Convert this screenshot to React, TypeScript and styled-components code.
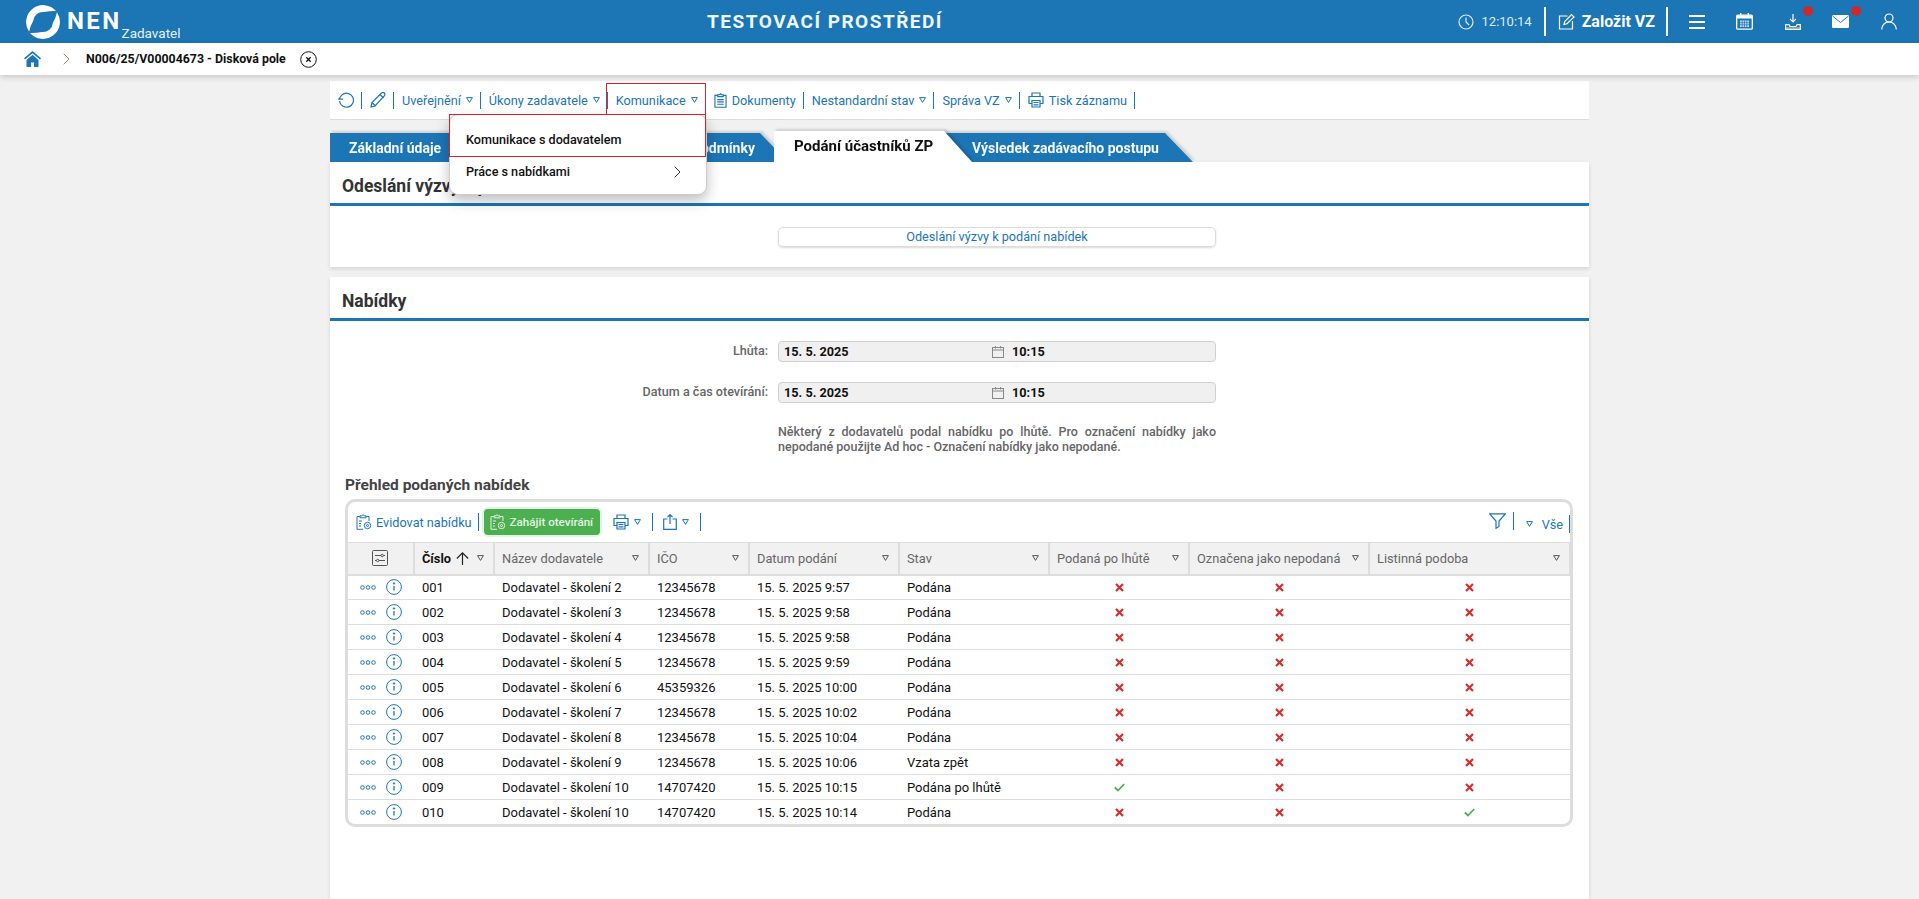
import React from 'react';
import styled, { createGlobalStyle } from 'styled-components';

const BLUE = '#1c75b5';

const GlobalStyle = createGlobalStyle`
  html, body {
    margin: 0;
    padding: 0;
    height: 899px;
    overflow: hidden;
    background: #f1f1f1;
    font-family: Roboto, "Liberation Sans", sans-serif;
    font-size: 13px;
  }
  * { box-sizing: border-box; }
`;

const TriSvg = styled.svg`
  flex: none;
`;

const Tri = () => (
  <TriSvg viewBox="0 0 7 6" width="7" height="6">
    <path d="M.6.6h5.800L3.500 5.400z" fill="none" stroke="currentColor" strokeWidth="1" strokeLinejoin="round" />
  </TriSvg>
);

function Logo() {
  const crescent =
    'M31 7.07A17 17 0 0 0 4.07 27.75Q5.5 21 8.04 17.13A10 10 0 0 1 18.87 8.04Q26 6.8 31 7.07Z';
  return (
    <svg viewBox="0 0 36 36" width="36" height="36" fill="#fff">
      <path d={crescent} />
      <path d={crescent} transform="rotate(180 18 18)" />
    </svg>
  );
}

const s = { fill: 'none', stroke: 'currentColor', strokeWidth: 1.2 };

const IconClock = () => (
  <svg viewBox="0 0 16 16" width="16" height="16" {...s}>
    <circle cx="8" cy="8" r="7" />
    <path d="M8 3.5V8l3 3" />
  </svg>
);
const IconEdit = () => (
  <svg viewBox="0 0 17 17" width="17" height="17" {...s}>
    <path d="M9.5 3H1.500v13h13V8" />
    <path d="M6 11.5l.7-3L13.500 1.500l2.500 2.500-7 6.800z" />
  </svg>
);
const IconMenu = () => (
  <svg viewBox="0 0 16 14" width="16" height="14" fill="none" stroke="currentColor" strokeWidth="1.8">
    <path d="M0 1h16M0 7h16M0 13h16" />
  </svg>
);
const IconCalendar = () => (
  <svg viewBox="0 0 17 17" width="17" height="17">
    <rect x=".7" y="2.2" width="15.6" height="14" rx="1" fill="none" stroke="currentColor" strokeWidth="1.3" />
    <path d="M1 2.5h15v3H1zM4 0h1.4v3H4zM11.600 0H13v3h-1.400z" fill="currentColor" />
    <path d="M4 7.5h9V14H4z" fill="currentColor" opacity=".75" />
    <path d="M4 9.7h9M4 11.8h9M6.200 7.500V14M8.500 7.500V14M10.800 7.500V14" stroke={BLUE} strokeWidth=".7" />
  </svg>
);
const IconTray = () => (
  <svg viewBox="0 0 16 16" width="16" height="16" fill="none" stroke="currentColor" strokeWidth="1.2">
    <path d="M8 0v7.5M5 5l3 3 3-3" />
    <path d="M.7 15.300V10.700h3.300l1 1.800h6l1-1.800h3.300v4.600z" />
    <path d="M1.300 13h13.400v2H1.300z" fill="currentColor" opacity=".35" stroke="none" />
  </svg>
);
const IconMail = () => (
  <svg viewBox="0 0 17 13" width="17" height="13">
    <rect width="17" height="13" rx="1.2" fill="currentColor" />
    <path d="M.5 1l8 6.500 8-6.500" fill="none" stroke={BLUE} strokeWidth="1" />
  </svg>
);
const IconUser = () => (
  <svg viewBox="0 0 16 17" width="16" height="17" {...s}>
    <circle cx="8" cy="5" r="4" />
    <path d="M.7 16.500c0-4 3-7.500 7.300-7.500s7.300 3.500 7.300 7.500" />
  </svg>
);
const IconHome = () => (
  <svg viewBox="0 0 17 16" width="17" height="16">
    <path fill={BLUE} d="M8.500 0L0 7.300l1 1.200 7.500-6.300L16 8.500l1-1.200zM2.500 9v7H7v-4.500h3V16h4.500V9L8.500 3.800z" />
  </svg>
);
const IconChevron = ({ color }: { color: string }) => (
  <svg viewBox="0 0 7 12" width="7" height="12" fill="none" stroke={color} strokeWidth="1">
    <path d="M.7.700L6 6 .7 11.300" />
  </svg>
);
const IconClose = () => (
  <svg viewBox="0 0 17 17" width="17" height="17" fill="none" stroke="#111" strokeWidth="1">
    <circle cx="8.500" cy="8.500" r="7.800" />
    <path d="M6.300 6.300l4.400 4.400m0-4.400l-4.400 4.400" strokeWidth="1.300" />
  </svg>
);
const IconRefresh = () => (
  <svg viewBox="0 0 16 16" width="16" height="16" {...s}>
    <path d="M3.800 3A7 7 0 1 1 1.500 9" />
    <path d="M3.800 3L.7 7.200h4.300" />
  </svg>
);
const IconPencil = () => (
  <svg viewBox="0 0 16 16" width="16" height="16" {...s}>
    <path d="M1 15l1-4.500L11.500 1c1-.8 2-.8 2.800 0 .8.800.8 2 0 2.800L5 14z" />
    <path d="M2 10.500L5.500 14M10 2.500l3.500 3.500" />
  </svg>
);
const IconClipboard = () => (
  <svg viewBox="0 0 14 16" width="13" height="15" {...s}>
    <path d="M4 2.500H1V15.300h12V2.500h-3" />
    <path d="M4 3.800V1.800h1.800L7 .7l1.200 1.100H10v2z" />
    <path d="M3.500 7h7M3.500 9.500h7M3.500 12h7" />
  </svg>
);
const IconPrinter = () => (
  <svg viewBox="0 0 16 16" width="16" height="16" {...s}>
    <path d="M4 4.500V1h8v3.500" />
    <path d="M4 11.500H1V4.500h14v7h-3" />
    <path d="M4 8.500h8v6.500H4zM5.500 10.500h5M5.500 12.800h5" />
  </svg>
);
const IconClipGear = () => (
  <svg viewBox="0 0 16 16" width="16" height="16" {...s} strokeWidth="1">
    <path d="M4 2.500H1V15.300h6M13 7V2.500h-3" />
    <path d="M4 3.800V1.800h1.800L7 .7l1.200 1.100H10v2z" />
    <path d="M3 7h3M3 9.500h2M3 12h2" />
    <circle cx="11.500" cy="11.500" r="3.200" />
    <circle cx="11.500" cy="11.500" r="1" />
  </svg>
);
const IconShare = () => (
  <svg viewBox="0 0 14 16" width="14" height="16" {...s}>
    <path d="M4.500 5H.7v10.300h12.600V5H9.500" />
    <path d="M7 10V.7M4.500 3L7 .7 9.500 3" />
  </svg>
);
const IconFilter = () => (
  <svg viewBox="0 0 17 16" width="17" height="16" {...s}>
    <path d="M.7.800h15.600L10 8v5.500L7 15.300V8z" />
  </svg>
);
const IconSliders = () => (
  <svg viewBox="0 0 16 16" width="16" height="16" fill="none" stroke="#555" strokeWidth="1">
    <rect x=".5" y=".5" width="15" height="15" rx="1" />
    <path d="M3 5.500h6M11.500 5.500H13M3 10.500h1.500M7 10.500h6" />
    <circle cx="10.200" cy="5.500" r="1.200" />
    <circle cx="5.700" cy="10.500" r="1.200" />
  </svg>
);
const IconDots = () => (
  <svg viewBox="0 0 16 5" width="16" height="5" fill="none" stroke={BLUE} strokeWidth="1">
    <circle cx="2.500" cy="2.500" r="1.800" />
    <circle cx="8" cy="2.500" r="1.800" />
    <circle cx="13.500" cy="2.500" r="1.800" />
  </svg>
);
const IconInfo = () => (
  <svg viewBox="0 0 16 16" width="16" height="16" fill="none" stroke={BLUE} strokeWidth="1">
    <circle cx="8" cy="8" r="7.400" />
    <path d="M8 7v4.500" strokeWidth="1.300" />
    <circle cx="8" cy="4.500" r=".7" fill={BLUE} />
  </svg>
);
const IconCross = () => (
  <svg viewBox="0 0 9 9" width="9" height="9" fill="none" stroke="#d32f2f" strokeWidth="2.2">
    <path d="M1 1l7 7m0-7L1 8" />
  </svg>
);
const IconCheck = () => (
  <svg viewBox="0 0 11 9" width="11" height="9" fill="none" stroke="#4caf50" strokeWidth="1.8">
    <path d="M.8 4.500L4 7.500 10.200 1" />
  </svg>
);
const IconDate = () => (
  <svg viewBox="0 0 12 12" width="12" height="12" fill="none" stroke="#888" strokeWidth="1">
    <rect x=".5" y="1.500" width="11" height="10" />
    <path d="M.5 4h11M3.500 0v2.500M8.500 0v2.500" />
  </svg>
);
const IconArrowUp = () => (
  <svg viewBox="0 0 12 12" width="13" height="13" fill="none" stroke="#222" strokeWidth="1.1">
    <path d="M6 12V.8M.8 6L6 .8 11.200 6" />
  </svg>
);

const TopBar = styled.header`
  height: 43px;
  background: ${BLUE};
  color: #fff;
  display: flex;
  align-items: center;
  padding-left: 25px;
  position: relative;
`;

const Brand = styled.div`
  display: flex;
  align-items: center;
  width: 400px;
`;

const BrandName = styled.span`
  font-size: 24px;
  font-weight: 700;
  letter-spacing: 2.4px;
  margin-left: 6px;
  line-height: 1;
  margin-top: -1px;
`;

const BrandRole = styled.span`
  font-size: 13.5px;
  line-height: 1;
  align-self: flex-end;
  margin-bottom: -1px;
  color: #e8f2f9;
`;

const EnvTitle = styled.div`
  position: absolute;
  left: 704px;
  width: 242px;
  text-align: center;
  font-size: 19px;
  font-weight: 700;
  letter-spacing: 1.5px;
  color: #eef6fb;
`;

const TopRight = styled.div`
  margin-left: auto;
  display: flex;
  align-items: center;
  height: 100%;
`;

const Clock = styled.div`
  display: flex;
  align-items: center;
  gap: 8px;
  font-size: 13px;
  color: #dcebf5;
  padding-right: 12px;
`;

const TopDivider = styled.div`
  width: 2px;
  height: 29px;
  background: #fff;
`;

const CreateBtn = styled.div`
  display: flex;
  align-items: center;
  gap: 7px;
  font-size: 16px;
  font-weight: 700;
  padding: 0 11px 0 12px;
`;

const TopIcons = styled.div`
  display: flex;
  align-items: center;
  margin-left: 20px;
  margin-right: 22px;
  gap: 31px;
`;

const TopIcon = styled.div<{ $dot?: boolean }>`
  position: relative;
  display: flex;
  width: 17px;
  height: 17px;
  align-items: center;
  justify-content: center;
  ${(p) =>
    p.$dot &&
    `&::after {
      content: '';
      position: absolute;
      top: -7px;
      right: -12px;
      width: 10px;
      height: 10px;
      border-radius: 50%;
      background: #cd2a2e;
    }`}
`;

const Breadcrumb = styled.div`
  height: 32px;
  background: #fff;
  box-shadow: 0 2px 6px rgba(0, 0, 0, 0.18);
  display: flex;
  align-items: center;
  padding-left: 24px;
  position: relative;
  z-index: 2;
`;

const CrumbArrow = styled.span`
  display: flex;
  margin: 0 16px 0 22px;
`;

const CrumbText = styled.span`
  font-size: 12.35px;
  font-weight: 700;
  color: #111;
`;

const CrumbClose = styled.span`
  display: flex;
  margin-left: 14px;
`;

const Main = styled.main`
  margin-left: 330px;
  width: 1259px;
  padding-top: 6px;
`;

const ActionBar = styled.nav`
  height: 39px;
  background: #fff;
  border-bottom: 1px solid #ddd;
  display: flex;
  align-items: center;
  padding-left: 8px;
  color: ${BLUE};
  position: relative;
`;

const ActionItem = styled.div<{ $boxed?: boolean }>`
  display: flex;
  align-items: center;
  gap: 5px;
  height: 17px;
  font-size: 12.7px;
  padding: 0 7px 0 8px;
  border-right: 1px solid ${BLUE};
  white-space: nowrap;
  position: relative;
  &:first-child {
    padding-left: 0;
  }
  ${(p) =>
    p.$boxed &&
    `&::before {
      content: '';
      position: absolute;
      left: -2px;
      right: -1px;
      top: -9px;
      bottom: -7px;
      border: 1px solid #d9212c;
      border-bottom: 0;
    }`}
`;

const Dropdown = styled.div`
  position: absolute;
  left: 119px;
  top: 33px;
  width: 258px;
  height: 81px;
  background: #fff;
  border: 1px solid #ccc;
  border-radius: 9px;
  box-shadow: 0 6px 14px rgba(0, 0, 0, 0.25);
  z-index: 10;
  color: #111;
  font-weight: 500;
  font-size: 12.6px;
`;

const DropItem = styled.div<{ $active?: boolean }>`
  height: ${(p) => (p.$active ? '43px' : '30px')};
  display: flex;
  align-items: center;
  justify-content: space-between;
  padding: ${(p) => (p.$active ? '8px 25px 0 16px' : '0 25px 1px 16px')};
  ${(p) =>
    p.$active &&
    `
    margin: -1px 0 0 -1px;
    width: 257px;
    border: 1px solid #d9212c;
  `}
`;

const Tabs = styled.div`
  display: flex;
  align-items: flex-end;
  height: 31px;
  margin-top: 11px;
`;

const Tab = styled.div<{ $active?: boolean; $w: number; $ml?: number }>`
  width: ${(p) => p.$w}px;
  margin-left: ${(p) => p.$ml ?? 0}px;
  height: ${(p) => (p.$active ? 31 : 29)}px;
  position: relative;
  z-index: ${(p) => (p.$active ? 3 : 1)};
  filter: drop-shadow(2px -2px 1px rgba(0, 0, 0, 0.13));
  &::before {
    content: '';
    position: absolute;
    inset: 0;
    background: ${(p) => (p.$active ? '#fff' : BLUE)};
    clip-path: polygon(0 0, calc(100% - 28px) 0, 100% 100%, 0 100%);
  }
`;

const TabLabel = styled.span<{ $active?: boolean; $left?: number; $right?: number }>`
  position: absolute;
  top: 7px;
  left: ${(p) => (p.$left !== undefined ? `${p.$left}px` : 'auto')};
  right: ${(p) => (p.$right !== undefined ? `${p.$right}px` : 'auto')};
  font-size: ${(p) => (p.$active ? 15 : 14)}px;
  font-weight: 700;
  white-space: nowrap;
  line-height: 16px;
  color: ${(p) => (p.$active ? '#111' : '#f4f9fc')};
`;

const Panel = styled.section<{ $grow?: boolean; $first?: boolean }>`
  background: #fff;
  box-shadow: 0 2px 4px rgba(0, 0, 0, 0.12);
  margin-top: ${(p) => (p.$first ? 0 : 10)}px;
  height: ${(p) => (p.$grow ? '622px' : '105px')};
  position: relative;
`;

const PanelTitle = styled.h2`
  margin: 0;
  height: 44px;
  padding: 12px 0 0 12px;
  line-height: 24px;
  font-size: 17.5px;
  font-weight: 700;
  color: #333;
  border-bottom: 3px solid ${BLUE};
  white-space: nowrap;
`;

const FormRow = styled.div`
  margin-left: 448px;
  width: 438px;
`;

const WideButton = styled(FormRow)`
  margin-top: 21px;
  height: 20px;
  border: 1px solid #ddd;
  border-radius: 5px;
  box-shadow: 0 1px 2px rgba(0, 0, 0, 0.15);
  color: ${BLUE};
  font-size: 12.67px;
  text-align: center;
  line-height: 18px;
`;

const FieldRow = styled.div<{ $top: number }>`
  display: flex;
  align-items: center;
  margin-top: ${(p) => p.$top}px;
`;

const FieldLabel = styled.label`
  width: 438px;
  text-align: right;
  color: #666;
  font-size: 12.6px;
  font-weight: 500;
  margin-top: -3px;
`;

const FieldBox = styled.div`
  margin-left: 10px;
  width: 438px;
  height: 21px;
  background: #f0f0f0;
  border: 1px solid #d0d0d0;
  border-radius: 4px;
  display: flex;
  align-items: center;
  padding-left: 5px;
  font-weight: 700;
  color: #111;
  font-size: 12.7px;
`;

const FieldDate = styled.span`
  width: 208px;
`;

const FieldTime = styled.span`
  margin-left: 8px;
`;

const Note = styled(FormRow)`
  margin-top: 21px;
  font-size: 12.5px;
  font-weight: 500;
  line-height: 15px;
  color: #666;
  text-align: justify;
`;

const SubTitle = styled.h3`
  margin: 21px 0 0 15px;
  font-size: 15.5px;
  font-weight: 700;
  line-height: 20px;
  color: #444;
`;

const TableCard = styled.div`
  margin: 4px 0 0 15px;
  width: 1228px;
  height: 328px;
  border: 3px solid #ddd;
  border-radius: 10px;
  overflow: hidden;
`;

const TableToolbar = styled.div`
  height: 40px;
  display: flex;
  align-items: center;
  padding: 0 0 0 8px;
  color: ${BLUE};
  font-size: 12.7px;
`;

const ToolItem = styled.div`
  display: flex;
  align-items: center;
  gap: 4px;
  height: 18px;
  padding-right: 6px;
  border-right: 1px solid ${BLUE};
`;

const GreenButton = styled.div`
  margin: 0 13px 0 5px;
  width: 116px;
  height: 26px;
  background: #4caf50;
  border-radius: 4px;
  box-shadow: 0 0 0 2px #e3f3e4;
  color: #e4f4e5;
  display: flex;
  align-items: center;
  gap: 4px;
  padding-left: 6px;
  font-size: 11.6px;
  font-weight: 500;
  white-space: nowrap;
`;

const MenuItem = styled(ToolItem)`
  gap: 5px;
  padding-right: 11px;
  margin-right: 10px;
`;

const ToolRight = styled.div`
  margin-left: auto;
  display: flex;
  align-items: center;
  margin-right: 0;
`;

const VseItem = styled(ToolItem)`
  padding: 0 6px 0 12px;
  gap: 9px;
  margin-top: 4px;
`;

const FilterItem = styled(ToolItem)`
  padding-right: 7px;
  margin-top: -2px;
`;

const Table = styled.table`
  border-collapse: collapse;
  table-layout: fixed;
  width: 1222px;
`;

const Th = styled.th<{ $strong?: boolean }>`
  height: 32px;
  padding: 0 8px 0 7px;
  background: #f1f1f1;
  border-top: 1px solid #ddd;
  border-bottom: 2px solid #ddd;
  border-right: 2px solid #ddd;
  text-align: left;
  font-weight: ${(p) => (p.$strong ? 700 : 400)};
  color: ${(p) => (p.$strong ? '#111' : '#666')};
  font-size: 12.8px;
`;

const ThInner = styled.div`
  display: flex;
  align-items: center;
  justify-content: space-between;
  white-space: nowrap;
  color: inherit;
  svg:last-child {
    color: #555;
    margin-right: 1px;
  }
`;

const SortLabel = styled.span`
  display: inline-flex;
  align-items: center;
  gap: 5px;
`;

const CenterCell = styled.div`
  display: flex;
  justify-content: center;
`;

const Td = styled.td`
  height: 25px;
  padding: 0 8px;
  border-bottom: 1px solid #ddd;
  color: #111;
  font-size: 13px;
  white-space: nowrap;
  line-height: 1;
`;

const RowActions = styled.div`
  display: flex;
  align-items: center;
  gap: 10px;
  margin-left: 12px;
`;

const ActionCell = styled(Td)`
  padding-left: 0;
`;

const columns = [
  { title: 'Název dodavatele', width: 155 },
  { title: 'IČO', width: 100 },
  { title: 'Datum podání', width: 150 },
  { title: 'Stav', width: 150 },
  { title: 'Podaná po lhůtě', width: 140 },
  { title: 'Označena jako nepodaná', width: 180 },
  { title: 'Listinná podoba', width: 201 },
];

const rows = [
  ['001', 'Dodavatel - školení 2', '12345678', '15. 5. 2025 9:57', 'Podána', 0, 0, 0],
  ['002', 'Dodavatel - školení 3', '12345678', '15. 5. 2025 9:58', 'Podána', 0, 0, 0],
  ['003', 'Dodavatel - školení 4', '12345678', '15. 5. 2025 9:58', 'Podána', 0, 0, 0],
  ['004', 'Dodavatel - školení 5', '12345678', '15. 5. 2025 9:59', 'Podána', 0, 0, 0],
  ['005', 'Dodavatel - školení 6', '45359326', '15. 5. 2025 10:00', 'Podána', 0, 0, 0],
  ['006', 'Dodavatel - školení 7', '12345678', '15. 5. 2025 10:02', 'Podána', 0, 0, 0],
  ['007', 'Dodavatel - školení 8', '12345678', '15. 5. 2025 10:04', 'Podána', 0, 0, 0],
  ['008', 'Dodavatel - školení 9', '12345678', '15. 5. 2025 10:06', 'Vzata zpět', 0, 0, 0],
  ['009', 'Dodavatel - školení 10', '14707420', '15. 5. 2025 10:15', 'Podána po lhůtě', 1, 0, 0],
  ['010', 'Dodavatel - školení 10', '14707420', '15. 5. 2025 10:14', 'Podána', 0, 0, 1],
] as const;

const Mark = ({ on }: { on: number }) => (
  <CenterCell>{on ? <IconCheck /> : <IconCross />}</CenterCell>
);

export default function App() {
  return (
    <>
      <GlobalStyle />
      <TopBar>
        <Brand>
          <Logo />
          <BrandName>NEN</BrandName>
          <BrandRole>Zadavatel</BrandRole>
        </Brand>
        <EnvTitle>TESTOVACÍ PROSTŘEDÍ</EnvTitle>
        <TopRight>
          <Clock>
            <IconClock />
            12:10:14
          </Clock>
          <TopDivider />
          <CreateBtn>
            <IconEdit />
            Založit VZ
          </CreateBtn>
          <TopDivider />
          <TopIcons>
            <TopIcon><IconMenu /></TopIcon>
            <TopIcon><IconCalendar /></TopIcon>
            <TopIcon $dot><IconTray /></TopIcon>
            <TopIcon $dot><IconMail /></TopIcon>
            <TopIcon><IconUser /></TopIcon>
          </TopIcons>
        </TopRight>
      </TopBar>
      <Breadcrumb>
        <IconHome />
        <CrumbArrow><IconChevron color="#a08c78" /></CrumbArrow>
        <CrumbText>N006/25/V00004673 - Disková pole</CrumbText>
        <CrumbClose><IconClose /></CrumbClose>
      </Breadcrumb>
      <Main>
        <ActionBar>
          <ActionItem><IconRefresh /></ActionItem>
          <ActionItem><IconPencil /></ActionItem>
          <ActionItem>Uveřejnění<Tri /></ActionItem>
          <ActionItem>Úkony zadavatele<Tri /></ActionItem>
          <ActionItem $boxed>Komunikace<Tri /></ActionItem>
          <ActionItem><IconClipboard />Dokumenty</ActionItem>
          <ActionItem>Nestandardní stav<Tri /></ActionItem>
          <ActionItem>Správa VZ<Tri /></ActionItem>
          <ActionItem><IconPrinter />Tisk záznamu</ActionItem>
          <Dropdown>
            <DropItem $active>Komunikace s dodavatelem</DropItem>
            <DropItem>
              Práce s nabídkami
              <IconChevron color="#333" />
            </DropItem>
          </Dropdown>
        </ActionBar>
        <Tabs>
          <Tab $w={200}><TabLabel $left={19}>Základní údaje</TabLabel></Tab>
          <Tab $w={258}><TabLabel $right={33}>Zadávací podmínky</TabLabel></Tab>
          <Tab $active $w={198} $ml={-14}><TabLabel $active $left={20}>Podání účastníků ZP</TabLabel></Tab>
          <Tab $w={251} $ml={-30}><TabLabel $left={30}>Výsledek zadávacího postupu</TabLabel></Tab>
        </Tabs>
        <Panel $first>
          <PanelTitle>Odeslání výzvy k podání nabídek</PanelTitle>
          <WideButton>Odeslání výzvy k podání nabídek</WideButton>
        </Panel>
        <Panel $grow>
          <PanelTitle>Nabídky</PanelTitle>
          <FieldRow $top={20}>
            <FieldLabel>Lhůta:</FieldLabel>
            <FieldBox>
              <FieldDate>15. 5. 2025</FieldDate>
              <IconDate />
              <FieldTime>10:15</FieldTime>
            </FieldBox>
          </FieldRow>
          <FieldRow $top={20}>
            <FieldLabel>Datum a čas otevírání:</FieldLabel>
            <FieldBox>
              <FieldDate>15. 5. 2025</FieldDate>
              <IconDate />
              <FieldTime>10:15</FieldTime>
            </FieldBox>
          </FieldRow>
          <Note>
            Některý z dodavatelů podal nabídku po lhůtě. Pro označení nabídky jako nepodané použijte Ad hoc - Označení nabídky jako nepodané.
          </Note>
          <SubTitle>Přehled podaných nabídek</SubTitle>
          <TableCard>
            <TableToolbar>
              <ToolItem><IconClipGear />Evidovat nabídku</ToolItem>
              <GreenButton><IconClipGear />Zahájit otevírání</GreenButton>
              <MenuItem><IconPrinter /><Tri /></MenuItem>
              <MenuItem><IconShare /><Tri /></MenuItem>
              <ToolRight>
                <FilterItem><IconFilter /></FilterItem>
                <VseItem><Tri />Vše</VseItem>
              </ToolRight>
            </TableToolbar>
            <Table>
              <colgroup>
                <col style={{ width: 66 }} />
                <col style={{ width: 80 }} />
                {columns.map((c) => (
                  <col key={c.title} style={{ width: c.width }} />
                ))}
              </colgroup>
              <thead>
                <tr>
                  <Th><CenterCell><IconSliders /></CenterCell></Th>
                  <Th $strong>
                    <ThInner>
                      <SortLabel>Číslo <IconArrowUp /></SortLabel>
                      <Tri />
                    </ThInner>
                  </Th>
                  {columns.map((c) => (
                    <Th key={c.title}>
                      <ThInner>{c.title}<Tri /></ThInner>
                    </Th>
                  ))}
                </tr>
              </thead>
              <tbody>
                {rows.map((r) => (
                  <tr key={r[0]}>
                    <ActionCell>
                      <RowActions>
                        <IconDots />
                        <IconInfo />
                      </RowActions>
                    </ActionCell>
                    <Td>{r[0]}</Td>
                    <Td>{r[1]}</Td>
                    <Td>{r[2]}</Td>
                    <Td>{r[3]}</Td>
                    <Td>{r[4]}</Td>
                    <Td><Mark on={r[5]} /></Td>
                    <Td><Mark on={r[6]} /></Td>
                    <Td><Mark on={r[7]} /></Td>
                  </tr>
                ))}
              </tbody>
            </Table>
          </TableCard>
        </Panel>
      </Main>
    </>
  );
}
